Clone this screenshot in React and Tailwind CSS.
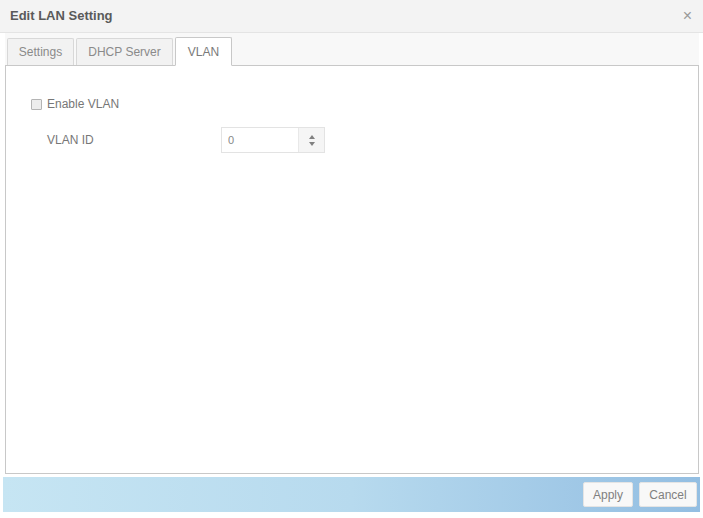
import React, { useState } from "react";

const font = { fontFamily: '"Liberation Sans", Arial, sans-serif' };

function Tab({ label, width, active, onClick }) {
  if (active) {
    return (
      <button
        onClick={onClick}
        style={{ width }}
        className="-mb-px h-[29px] border border-[#c8c8c8] border-b-white bg-white text-[12px] text-[#7a7a7a] rounded-t-[2px]"
      >
        {label}
      </button>
    );
  }
  return (
    <button
      onClick={onClick}
      style={{ width }}
      className="h-[27px] border border-[#d8d8d8] border-b-0 bg-[#f2f2f2] text-[12px] text-[#8a8a8a] rounded-t-[2px]"
    >
      {label}
    </button>
  );
}

export default function App() {
  const [tab, setTab] = useState("vlan");
  const [enabled, setEnabled] = useState(false);
  const [vlanId, setVlanId] = useState(0);

  return (
    <div style={font} className="w-[703px] h-[518px] bg-white flex flex-col overflow-hidden">
      {/* header */}
      <div className="h-[33px] shrink-0 flex items-center justify-between pl-[10px] pr-[11px] bg-[#f3f3f3] border-b border-[#e4e4e4]">
        <span className="text-[13px] font-bold text-[#5a5a5a]">Edit LAN Setting</span>
        <span className="text-[16px] text-[#999] leading-none">×</span>
      </div>

      {/* tabs */}
      <div className="h-[33px] shrink-0 flex items-end gap-[2px] pl-[2px] bg-[#f8f8f8] border-b border-[#c8c8c8] ml-[5px] mr-[4px]">
        <Tab label="Settings" width={67} active={tab === "settings"} onClick={() => setTab("settings")} />
        <Tab label="DHCP Server" width={97} active={tab === "dhcp"} onClick={() => setTab("dhcp")} />
        <Tab label="VLAN" width={57} active={tab === "vlan"} onClick={() => setTab("vlan")} />
      </div>

      {/* panel */}
      <div className="h-[408px] shrink-0 ml-[5px] mr-[4px] border border-t-0 border-[#c8c8c8] bg-white pt-[29px] pl-[25px]">
        <label className="flex items-center gap-[5px] text-[12px] text-[#777]">
          <input
            type="checkbox"
            checked={enabled}
            onChange={(e) => setEnabled(e.target.checked)}
            className="appearance-none w-[11px] h-[11px] m-0 border border-[#b4b4b4] bg-[#ececec] rounded-[1px] checked:bg-[#8a8a8a] checked:border-[#777]"
          />
          Enable VLAN
        </label>
        <div className="flex items-center mt-[14px] pl-[16px]">
          <span className="w-[174px] text-[12px] text-[#777]">VLAN ID</span>
          <div className="flex h-[26px] w-[104px] border border-[#e3e3e3] bg-white">
            <input
              value={vlanId}
              onChange={(e) => setVlanId(e.target.value)}
              className="w-[76px] px-[6px] text-[11px] text-[#888] outline-none"
            />
            <div className="flex-1 flex flex-col items-center justify-center gap-[3px] bg-[#f5f5f5] border-l border-[#e8e8e8]">
              <svg width="6" height="4" viewBox="0 0 6 4"><path d="M3 0L6 4H0z" fill="#808080" /></svg>
              <svg width="6" height="4" viewBox="0 0 6 4"><path d="M0 0h6L3 4z" fill="#808080" /></svg>
            </div>
          </div>
        </div>
      </div>

      {/* footer */}
      <div className="h-[35px] shrink-0 mt-[3px] mb-[6px] mx-[3px] flex items-center justify-end gap-[6px] pr-[3px] bg-gradient-to-r from-[#c6e5f3] via-[#b7daee] to-[#93bee2]">
        <button className="h-[25px] w-[50px] bg-[#f8f8f8] border border-[#e4e4e4] rounded-[2px] text-[12px] text-[#808080]">Apply</button>
        <button className="h-[25px] w-[58px] bg-[#f8f8f8] border border-[#e4e4e4] rounded-[2px] text-[12px] text-[#808080]">Cancel</button>
      </div>
    </div>
  );
}
